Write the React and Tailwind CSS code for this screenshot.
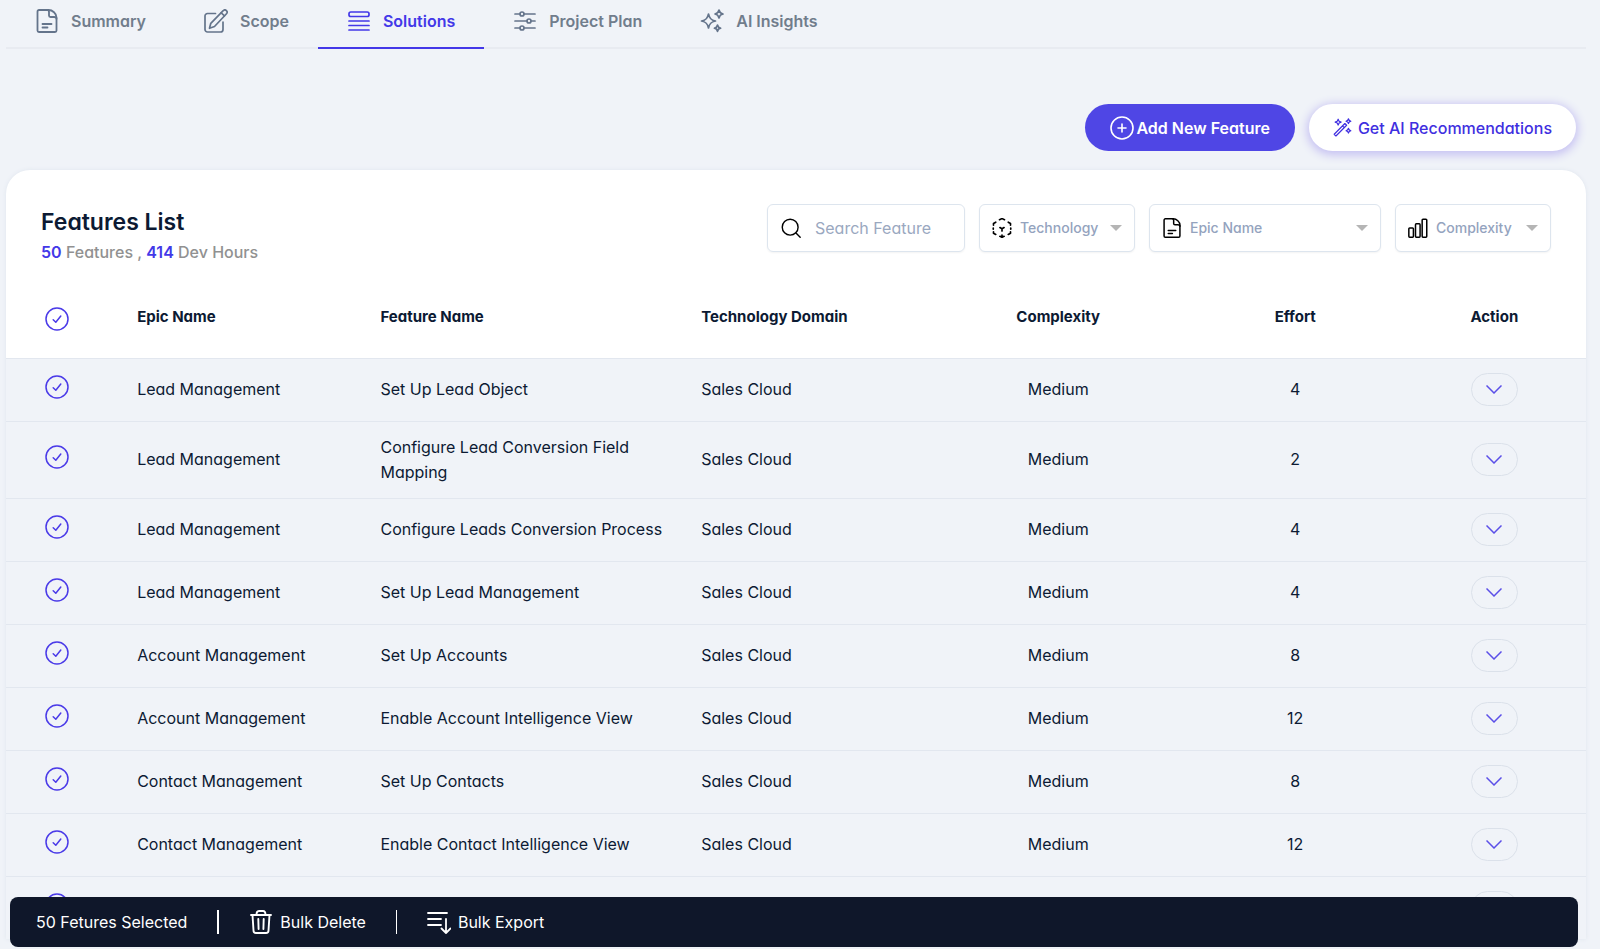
import React, { useState } from 'react';

const tabs = [
  { name: 'Summary', icon: DocumentIcon },
  { name: 'Scope', icon: EditIcon },
  { name: 'Solutions', icon: LinesIcon },
  { name: 'Project Plan', icon: SlidersIcon },
  { name: 'AI Insights', icon: SparklesIcon },
];

const features = [
  { epic: 'Lead Management', name: 'Set Up Lead Object', tech: 'Sales Cloud', complexity: 'Medium', effort: 4 },
  { epic: 'Lead Management', name: 'Configure Lead Conversion Field Mapping', tech: 'Sales Cloud', complexity: 'Medium', effort: 2 },
  { epic: 'Lead Management', name: 'Configure Leads Conversion Process', tech: 'Sales Cloud', complexity: 'Medium', effort: 4 },
  { epic: 'Lead Management', name: 'Set Up Lead Management', tech: 'Sales Cloud', complexity: 'Medium', effort: 4 },
  { epic: 'Account Management', name: 'Set Up Accounts', tech: 'Sales Cloud', complexity: 'Medium', effort: 8 },
  { epic: 'Account Management', name: 'Enable Account Intelligence View', tech: 'Sales Cloud', complexity: 'Medium', effort: 12 },
  { epic: 'Contact Management', name: 'Set Up Contacts', tech: 'Sales Cloud', complexity: 'Medium', effort: 8 },
  { epic: 'Contact Management', name: 'Enable Contact Intelligence View', tech: 'Sales Cloud', complexity: 'Medium', effort: 12 },
  { epic: '', name: '', tech: '', complexity: '', effort: '' },
];

function Svg({ className, children, width = 1.5 }) {
  return (
    <svg
      viewBox="0 0 24 24"
      fill="none"
      stroke="currentColor"
      strokeWidth={width}
      strokeLinecap="round"
      strokeLinejoin="round"
      className={className}
      aria-hidden="true"
    >
      {children}
    </svg>
  );
}

function DocumentIcon({ className }) {
  return (
    <Svg className={className} width={1.8}>
      <path d="M13.5 1H4a1.500 1.500 0 0 0-1.500 1.500v19A1.500 1.500 0 0 0 4 23h16a1.500 1.500 0 0 0 1.500-1.500V8.500C21.500 4.500 17.500 1 13.500 1Z" />
      <path d="M12.500 1c1.200 0 1.500 1 1.500 2v3.500C14 7.500 14.500 8 15.500 8H19c1.500 0 2.500 .3 2.500 1.800M7.500 15h9M7.500 18.500h5" />
    </Svg>
  );
}

function EditIcon({ className }) {
  return (
    <Svg className={className} width={1.7}>
      <path d="M11.500 4.500H3.500A2.500 2.500 0 0 0 1 7v13.500A2.500 2.500 0 0 0 3.500 23h13a2.500 2.500 0 0 0 2.500-2.500V13" />
      <path d="M19.200 1.700a2.200 2.200 0 0 1 3.300 3L10.500 17.500 5.500 19.300l1.300-5Z" />
      <path d="m17.200 3.800 3.300 3" />
    </Svg>
  );
}

function LinesIcon({ className }) {
  return (
    <Svg className={className} width={1.7}>
      <rect x="2" y="3" width="20" height="4.500" rx="1.800" />
      <path d="M2 12h20M2 16.500h20M2 21h20" />
    </Svg>
  );
}

function SlidersIcon({ className }) {
  return (
    <Svg className={className} width={1.7}>
      <path d="M2 5h5M11 5h11M2 12h12M18 12h4M2 19h5M11 19h11" />
      <circle cx="9" cy="5" r="2" />
      <circle cx="16" cy="12" r="2" />
      <circle cx="9" cy="19" r="2" />
    </Svg>
  );
}

function SparklesIcon({ className }) {
  return (
    <Svg className={className} width={1.7}>
      <path d="M8.500 5c.9 4.500 2.500 6.100 7 7-4.500 .9-6.100 2.500-7 7-.9-4.500-2.500-6.100-7-7 4.500-.9 6.100-2.500 7-7Z" />
      <path d="M19 1c.5 2.500 1.500 3.500 4 4-2.500 .5-3.500 1.500-4 4-.5-2.500-1.500-3.500-4-4 2.500-.5 3.500-1.500 4-4Z" />
      <path d="M17.500 16c.4 2 1.100 2.700 3.100 3.200-2 .4-2.700 1.100-3.100 3.100-.4-2-1.100-2.700-3.100-3.100 2-.5 2.700-1.200 3.100-3.200Z" />
    </Svg>
  );
}

function WandIcon({ className }) {
  return (
    <Svg className={className}>
      <path d="M1.500 20.500 15 7l2.200 2.200L3.700 22.700ZM12 10l2.200 2.200" />
      <path d="M6.500 1.500 7.700 4 10.200 5.200 7.700 6.400 6.500 9 5.300 6.400 2.800 5.200 5.300 4ZM19.500 1l1 2 2 1-2 1-1 2-1-2-2-1 2-1ZM19.500 13l1 2 2 1-2 1-1 2-1-2-2-1 2-1Z" />
    </Svg>
  );
}

function TechnologyIcon({ className }) {
  return (
    <Svg className={className} width={2}>
      <path d="m9 2 3-1.300L15 2M4.500 5 1.800 6.500v2.200M19.500 5l2.700 1.500v2.200M1.500 12v1.500M22.500 12v1.500M1.800 16.500v1.700l2.700 1.500M22.200 16.500v1.700l-2.700 1.500M9.500 22l2.500 1.200 2.500-1.200M12 20.500v2M12 13v2.500M12 13l-2.500-1.500M12 13l2.500-1.500" />
    </Svg>
  );
}

function BarsIcon({ className }) {
  return (
    <Svg className={className} width={1.8}>
      <rect x="1" y="12" width="5.500" height="11" rx="1" />
      <rect x="9" y="7" width="5.500" height="16" rx="1" />
      <rect x="17" y="1.500" width="5.500" height="21.500" rx="1" />
    </Svg>
  );
}

function TrashIcon({ className }) {
  return (
    <Svg className={className} width={1.9}>
      <path d="M2 5h20M7.500 5c0-2.500 .5-4 2.500-4h4c2 0 2.500 1.500 2.500 4M3.500 5l1 15.500A2.500 2.500 0 0 0 7 23h10a2.500 2.500 0 0 0 2.500-2.500l1-15.500M9.300 9l.3 10M14.700 9l-.3 10" />
    </Svg>
  );
}

function ExportIcon({ className }) {
  return (
    <Svg className={className} width={1.8}>
      <path d="M1 3h19M1 9h13M1 15h13M19 9v14M14.500 18.500 19 23l4.500-4.500" />
    </Svg>
  );
}

function RoundCheck({ label, checked, onChange }) {
  return (
    <label className="grid w-6 place-items-center text-[#4a3ae8]">
      <input
        type="checkbox"
        aria-label={label}
        checked={checked}
        onChange={onChange}
        className="col-start-1 row-start-1 size-6 cursor-pointer appearance-none rounded-full"
      />
      <Svg className="pointer-events-none col-start-1 row-start-1 size-6">
        <circle cx="12" cy="12" r="11" />
        {checked && <path d="m8.200 12.800 2.600 2.500 5-6.300" />}
      </Svg>
    </label>
  );
}

function FilterSelect({ label, icon: Icon, className }) {
  return (
    <div className={`grid h-12 items-center rounded-md border border-[#dde5ee] bg-white shadow-xs ${className}`}>
      <Icon className="pointer-events-none col-start-1 row-start-1 ml-3 size-5" />
      <select
        aria-label={label}
        className="col-start-1 row-start-1 h-full w-full appearance-none bg-transparent pr-8 pl-10 text-sm font-medium text-[#94a3be] outline-none"
      >
        <option>{label}</option>
      </select>
      <svg viewBox="0 0 12 6" className="pointer-events-none col-start-1 row-start-1 mr-3 h-1.5 w-3 justify-self-end fill-[#b5b5b5]" aria-hidden="true">
        <path d="M0 0h12L6 6Z" />
      </svg>
    </div>
  );
}

const App = () => {
  const [activeTab, setActiveTab] = useState('Solutions');
  const [search, setSearch] = useState('');
  const [selected, setSelected] = useState(features.map(() => true));
  const allSelected = selected.every(Boolean);

  const toggleRow = (index) => {
    setSelected(selected.map((value, i) => (i === index ? !value : value)));
  };

  return (
    <div className="h-screen overflow-hidden bg-[#f0f3f8] pr-3.5 pl-1.5 font-[Inter,sans-serif] text-[#0c1a33] [font-feature-settings:'cv11']">
      <nav className="flex h-[49px] border-b-2 border-[#e8ebf1]">
        {tabs.map(({ name, icon: Icon }) => (
          <button
            key={name}
            type="button"
            onClick={() => setActiveTab(name)}
            className={`-mb-0.5 flex items-center gap-3 border-b-2 px-[29px] pb-1.5 text-base font-semibold ${
              activeTab === name ? 'border-[#4338e8] text-[#4338e8]' : 'border-transparent text-[#717d8c]'
            }`}
          >
            <Icon className={activeTab === name ? 'size-6' : 'size-6 text-[#64748b]'} />
            {name}
          </button>
        ))}
      </nav>

      <div className="mt-[55px] flex justify-end gap-3.5 pr-2.5">
        <button type="button" className="flex h-[47px] items-center gap-0.5 rounded-full bg-[#4f46e5] px-[25px] text-base font-semibold text-white">
          <Svg className="size-6" width={1.6}>
            <circle cx="12" cy="12" r="11" />
            <path d="M12 8v8M8 12h8" />
          </Svg>
          Add New Feature
        </button>
        <button type="button" className="flex h-[47px] items-center gap-1.5 rounded-full bg-white px-6 text-base font-medium text-[#3f2fe0] shadow-[0_2px_10px_2px_#c5c0f2]">
          <WandIcon className="size-[19px]" />
          Get AI Recommendations
        </button>
      </div>

      <section className="mt-[19px] rounded-t-3xl bg-white shadow-[0_0_4px_#dfe5ee]">
        <div className="flex items-start justify-between px-[35px] pt-[34px]">
          <div>
            <h1 className="text-[23px] leading-9 font-semibold">Features List</h1>
            <p className="text-base leading-6 font-medium text-[#919191]">
              <span className="font-semibold text-[#4338e8]">50</span> Features ,{' '}
              <span className="font-semibold text-[#4338e8]">414</span> Dev Hours
            </p>
          </div>
          <div className="flex gap-3.5 text-black">
            <div className="flex h-12 w-[198px] items-center gap-3.5 rounded-md border border-[#dde5ee] px-[13px] shadow-xs">
              <Svg className="size-5 shrink-0" width={1.7}>
                <circle cx="11" cy="11" r="9.500" />
                <path d="m18 18 5 5" />
              </Svg>
              <input
                type="text"
                aria-label="Search Feature"
                placeholder="Search Feature"
                value={search}
                onChange={(e) => setSearch(e.target.value)}
                className="w-full min-w-0 text-base outline-none placeholder:text-[#9aa8bf]"
              />
            </div>
            <FilterSelect label="Technology" icon={TechnologyIcon} className="w-[156px]" />
            <FilterSelect label="Epic Name" icon={DocumentIcon} className="w-[232px]" />
            <FilterSelect label="Complexity" icon={BarsIcon} className="w-[156px]" />
          </div>
        </div>

        <table className="mt-4 w-full table-fixed text-left text-base leading-[25px]">
          <colgroup>
            <col className="w-[8.3%]" />
            <col className="w-[15.4%]" />
            <col className="w-[20.3%]" />
            <col className="w-[14.4%]" />
            <col className="w-[16.4%]" />
            <col className="w-[13.6%]" />
            <col className="w-[11.6%]" />
          </colgroup>
          <thead>
            <tr className="h-[78px] text-[15px] font-bold">
              <th className="pl-[39px]">
                <RoundCheck
                  label="Select all features"
                  checked={allSelected}
                  onChange={() => setSelected(selected.map(() => !allSelected))}
                />
              </th>
              <th className="pb-1">Epic Name</th>
              <th className="pb-1">Feature Name</th>
              <th className="pb-1">Technology Domain</th>
              <th className="pb-1 text-center">Complexity</th>
              <th className="pb-1 text-center">Effort</th>
              <th className="pb-1 text-center">Action</th>
            </tr>
          </thead>
          <tbody className="bg-[#f0f3f8]">
            {features.map((feature, index) => (
              <tr key={index} className="h-[63px] border-t border-[#e2e7ef]">
                <td className="pb-1.5 pl-[39px]">
                  <RoundCheck
                    label={`Select feature ${index + 1}`}
                    checked={selected[index]}
                    onChange={() => toggleRow(index)}
                  />
                </td>
                <td>{feature.epic}</td>
                <td className="py-[13px] pr-8">{feature.name}</td>
                <td>{feature.tech}</td>
                <td className="text-center">{feature.complexity}</td>
                <td className="text-center">{feature.effort}</td>
                <td>
                  <button
                    type="button"
                    aria-label="Show feature details"
                    className="mx-auto flex h-[33px] w-[47px] items-center justify-center rounded-full border border-[#dbe1ea] text-[#5b4fe8]"
                  >
                    <svg viewBox="0 0 16 9" fill="none" stroke="currentColor" strokeWidth="1.500" className="h-[9px] w-4" aria-hidden="true">
                      <path d="m.5 .5 7.500 7.500L15.500 .5" />
                    </svg>
                  </button>
                </td>
              </tr>
            ))}
          </tbody>
        </table>
      </section>

      <div className="fixed right-[22px] bottom-0.5 left-2.5 flex h-[50px] items-center rounded-lg bg-[#0f172a] pl-[26px] text-base text-white">
        <span>50 Fetures Selected</span>
        <span className="ml-[30px] h-6 w-0.5 bg-white" />
        <button type="button" className="ml-[30px] flex items-center gap-[7px]">
          <TrashIcon className="size-6" />
          Bulk Delete
        </button>
        <span className="ml-[30px] h-6 w-px bg-white" />
        <button type="button" className="ml-[30px] flex items-center gap-[7px]">
          <ExportIcon className="size-6" />
          Bulk Export
        </button>
      </div>
    </div>
  );
};

export default App;
